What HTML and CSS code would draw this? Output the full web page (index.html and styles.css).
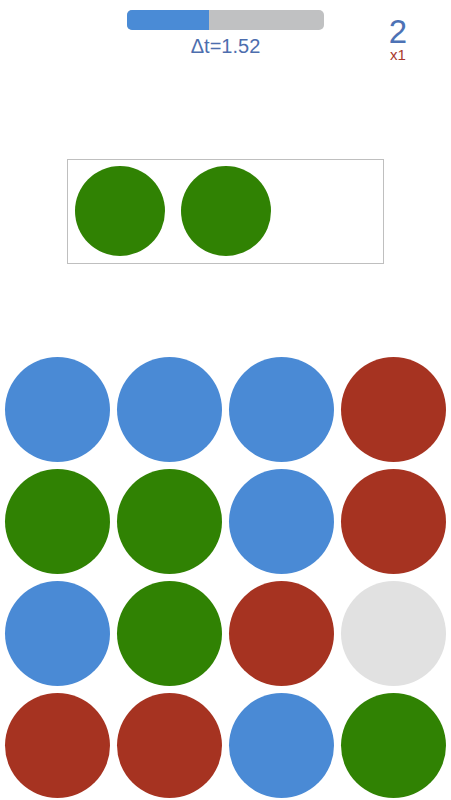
FILE: index.html
```html
<!DOCTYPE html>
<html>
<head>
<meta charset="utf-8">
<link rel="stylesheet" href="styles.css">
</head>
<body>
<div class="header">
  <div class="timer">
    <div class="bar"><div class="fill" style="width:41.6%"></div></div>
    <div class="dt">Δt=1.52</div>
  </div>
  <div class="score">
    <div class="num">2</div>
    <div class="mult">x1</div>
  </div>
</div>
<div class="target">
  <div class="dot green small"></div>
  <div class="dot green small"></div>
</div>
<div class="grid">
  <div class="dot blue"></div>
  <div class="dot blue"></div>
  <div class="dot blue"></div>
  <div class="dot red"></div>
  <div class="dot green"></div>
  <div class="dot green"></div>
  <div class="dot blue"></div>
  <div class="dot red"></div>
  <div class="dot blue"></div>
  <div class="dot green"></div>
  <div class="dot red"></div>
  <div class="dot empty"></div>
  <div class="dot red"></div>
  <div class="dot red"></div>
  <div class="dot blue"></div>
  <div class="dot green"></div>
</div>
</body>
</html>
```
FILE: styles.css
```css
html, body {
  margin: 0;
  padding: 0;
  background: #ffffff;
  font-family: "Liberation Sans", Arial, sans-serif;
}
body {
  width: 451px;
  height: 800px;
  overflow: hidden;
}
.header {
  display: grid;
  grid-template-columns: 127px 197px 1fr;
  padding-top: 10px;
  height: 58px;
  box-sizing: border-box;
}
.timer {
  grid-column: 2;
  display: flex;
  flex-direction: column;
  align-items: center;
}
.bar {
  width: 197px;
  height: 20px;
  background: #c0c1c2;
  border-radius: 5px;
  overflow: hidden;
}
.fill {
  height: 100%;
  background: #4a8bd6;
}
.dt {
  margin-top: 4px;
  font-size: 20px;
  line-height: 24px;
  color: #4d6eae;
}
.score {
  grid-column: 3;
  justify-self: start;
  margin-left: 62px;
  width: 24px;
  text-align: center;
  margin-top: 7px;
}
.num {
  font-size: 33px;
  line-height: 30px;
  color: #4d72b5;
}
.mult {
  font-size: 15px;
  line-height: 16px;
  color: #a8382c;
}
.target {
  margin: 101px 0 0 67px;
  width: 317px;
  height: 105px;
  box-sizing: border-box;
  border: 1px solid #bfbfbf;
  padding: 6px 7px 7px 7px;
  display: flex;
  gap: 16px;
}
.grid {
  margin-top: 93px;
  padding: 0 5px;
  display: grid;
  grid-template-columns: repeat(4, 105px);
  grid-auto-rows: 105px;
  column-gap: 7px;
  row-gap: 7px;
}
.dot {
  width: 105px;
  height: 105px;
  border-radius: 50%;
}
.dot.small {
  width: 90px;
  height: 90px;
}
.blue { background: #4a8ad5; }
.green { background: #308203; }
.red { background: #a63321; }
.empty { background: #e1e1e1; }
```
